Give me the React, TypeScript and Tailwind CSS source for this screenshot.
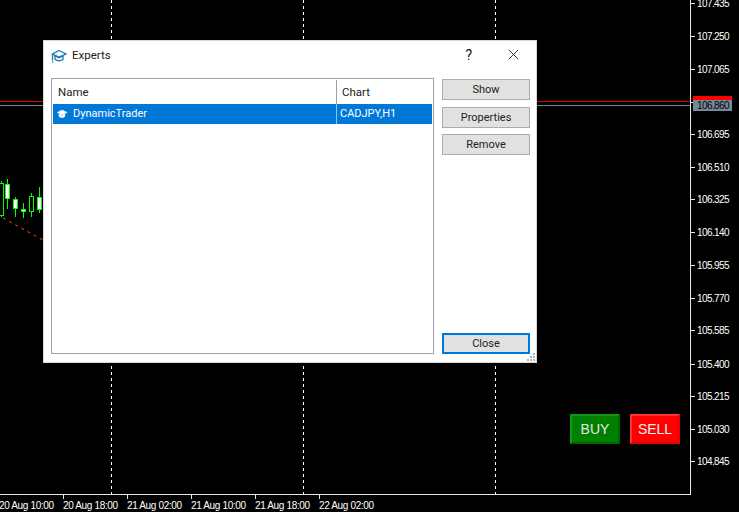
const priceLabels = ["107.435", "107.250", "107.065", "", "106.695", "106.510", "106.325", "106.140", "105.955", "105.770", "105.585", "105.400", "105.215", "105.030", "104.845"];
const timeLabels = ["20 Aug 10:00", "20 Aug 18:00", "21 Aug 02:00", "21 Aug 10:00", "21 Aug 18:00", "22 Aug 02:00"];
const tickYs = [3, 36, 69, 102, 134, 167, 199, 232, 265, 298, 330, 364, 396, 429, 461];

const candles = [
  { x: 1, top: 183, bottom: 215, wickTop: 181, wickBottom: 217, fill: "#000000" },
  { x: 7, top: 184, bottom: 198, wickTop: 179, wickBottom: 209, fill: "#ffffff" },
  { x: 15, top: 199, bottom: 208, wickTop: 197, wickBottom: 217, fill: "#ffffff" },
  { x: 23, top: 209, bottom: 211, wickTop: 203, wickBottom: 218, fill: "#ffffff" },
  { x: 31, top: 196, bottom: 211, wickTop: 193, wickBottom: 217, fill: "#000000" },
  { x: 39, top: 197, bottom: 209, wickTop: 187, wickBottom: 213, fill: "#ffffff" },
];

function CapIcon({ className, filled }: { className: string; filled?: boolean }) {
  return (
    <svg viewBox="0 0 16 16" className={className} fill={filled ? "currentColor" : "none"} stroke="currentColor" strokeWidth={filled ? 0.6 : 1.3}>
      <path d="M8 2.5 15 6 8 9.2 1.5 6Z" />
      <path d="M4 8v3.2c1.2 1.1 2.6 1.6 4 1.6s2.8-.5 4-1.6V8L8 9.9Z" />
      {!filled && <path d="M1.5 6v6.5M1 14h1.2" />}
    </svg>
  );
}

function DialogButton({ label, primary }: { label: string; primary?: boolean }) {
  return (
    <button
      className={`w-[88px] h-[21px] pt-[2px] flex items-center justify-center bg-[#e1e1e1] text-[11px] text-[#222] ${
        primary ? "border-2 border-[#0078d7]" : "border border-[#adadad]"
      }`}
    >
      {label}
    </button>
  );
}

function ChartPlot() {
  return (
    <svg className="absolute inset-0" width="690" height="494">
      {[111, 303, 495].map((x) => (
        <line key={x} x1={x + 0.5} y1={0} x2={x + 0.5} y2={494} stroke="#ffffff" strokeDasharray="3 3" />
      ))}
      <line x1={0} y1={101.5} x2={690} y2={101.5} stroke="#e00000" />
      <line x1={0} y1={105.5} x2={690} y2={105.5} stroke="#778899" />
      <line x1={3} y1={218} x2={43} y2={240} stroke="#ff4a1a" strokeDasharray="3 4" />
      {candles.map((c) => (
        <g key={c.x}>
          <line x1={c.x + 0.5} y1={c.wickTop} x2={c.x + 0.5} y2={c.wickBottom} stroke="#00ff00" />
          <rect x={c.x - 2 + 0.5} y={c.top + 0.5} width={4} height={c.bottom - c.top} fill={c.fill} stroke="#00ff00" />
        </g>
      ))}
    </svg>
  );
}

export default function App() {
  return (
    <div className="relative w-[739px] h-[512px] bg-black overflow-hidden font-['Liberation_Sans',sans-serif]">
      <div className="flex h-[495px]">
        <div className="relative w-[690px] border-b border-[#e8e8e8]">
          <ChartPlot />
          <div className="absolute left-[570px] top-[414px] flex gap-[10px]">
            <button className="w-[50px] h-[30px] flex items-center justify-center bg-[#008000] border-l-2 border-t-2 border-r-2 border-b-2 border-l-[#0d9a0d] border-t-[#0d9a0d] border-r-[#006400] border-b-[#006400] text-[14px] text-[#e6e6e6]">
              BUY
            </button>
            <button className="w-[50px] h-[30px] flex items-center justify-center bg-[#ff0000] border-l-2 border-t-2 border-r-2 border-b-2 border-l-[#ff3030] border-t-[#ff3030] border-r-[#e60000] border-b-[#e60000] text-[14px] text-[#f0f0f0]">
              SELL
            </button>
          </div>
        </div>
        <div className="relative w-[49px] border-l border-[#e8e8e8] text-[10px] text-white">
          {tickYs.map((y, i) => (
            <div key={y} className="absolute left-0 flex items-center h-[12px]" style={{ top: y - 6 }}>
              <span className="w-[4px] h-px bg-[#e8e8e8]" />
              {priceLabels[i] && <span className="ml-[2px] tracking-[-0.6px]">{priceLabels[i]}</span>}
            </div>
          ))}
          <div className="absolute left-[2px] top-[96px] w-[39px] h-[15px] bg-[#ff0000]">
            <div className="mt-[4px] h-[11px] bg-[#778899] flex items-center pl-[4px] text-black tracking-[-0.6px]">106.860</div>
          </div>
        </div>
      </div>

      <div className="flex text-[10px] text-white">
        {timeLabels.map((t, i) => (
          <div key={t} className="relative w-[64px] shrink-0 h-[17px]">
            {i < 5 && <span className="absolute left-[63px] top-0 w-px h-[4px] bg-[#e8e8e8]" />}
            <span className="absolute -left-px top-[3px] whitespace-nowrap tracking-[-0.35px]">{t}</span>
          </div>
        ))}
      </div>

      <div className="absolute left-[43px] top-[40px] w-[494px] h-[323px] bg-white border border-[#d8d8d8] flex flex-col font-['Roboto',sans-serif] text-[#222]">
        <div className="h-[29px] mb-[8px] shrink-0 flex items-center pl-[7px] pr-[17px]">
          <CapIcon className="w-[16px] h-[16px] text-[#1f78b4]" />
          <span className="ml-[5px] text-[11.5px] text-[#1a1a1a]">Experts</span>
          <span className="ml-auto mr-[36px] text-[14px] text-[#111]">?</span>
          <svg viewBox="0 0 12 12" className="w-[11px] h-[11px] -mt-[3px] text-[#222]" fill="none" stroke="currentColor">
            <path d="M1 1 11 11M11 1 1 11" />
          </svg>
        </div>
        <div className="flex flex-1 pl-[7px] pr-[6px] pb-[8px] gap-[8px]">
          <div className="w-[383px] border border-[#a0a0b0] p-px text-[11px]">
            <div className="flex h-[24px] items-center text-[11.5px]">
              <div className="w-[284px] h-full flex items-center pl-[5px] pt-[2px] border-r border-[#a0a0a0]">Name</div>
              <div className="flex-1 pl-[5px] pt-[2px]">Chart</div>
            </div>
            <div className="flex h-[20px] items-center bg-[#0078d7] text-white">
              <div className="w-[284px] h-full flex items-center pl-[3px] border-r border-[#8fc0e8]">
                <CapIcon filled className="w-[12px] h-[12px]" />
                <span className="ml-[5px] pt-[1px]">DynamicTrader</span>
              </div>
              <div className="flex-1 pl-[3px] pt-[1px]">CADJPY,H1</div>
            </div>
          </div>
          <div className="flex flex-col pt-px">
            <DialogButton label="Show" />
            <div className="h-[7px]" />
            <DialogButton label="Properties" />
            <div className="h-[6px]" />
            <DialogButton label="Remove" />
            <div className="mt-auto">
              <DialogButton label="Close" primary />
            </div>
          </div>
        </div>
        <svg className="absolute right-0 bottom-0" width="10" height="10" fill="#b4b4b4">
          <rect x="7" y="1" width="2" height="2" />
          <rect x="4" y="4" width="2" height="2" />
          <rect x="7" y="4" width="2" height="2" />
          <rect x="1" y="7" width="2" height="2" />
          <rect x="4" y="7" width="2" height="2" />
          <rect x="7" y="7" width="2" height="2" />
        </svg>
      </div>
    </div>
  );
}
